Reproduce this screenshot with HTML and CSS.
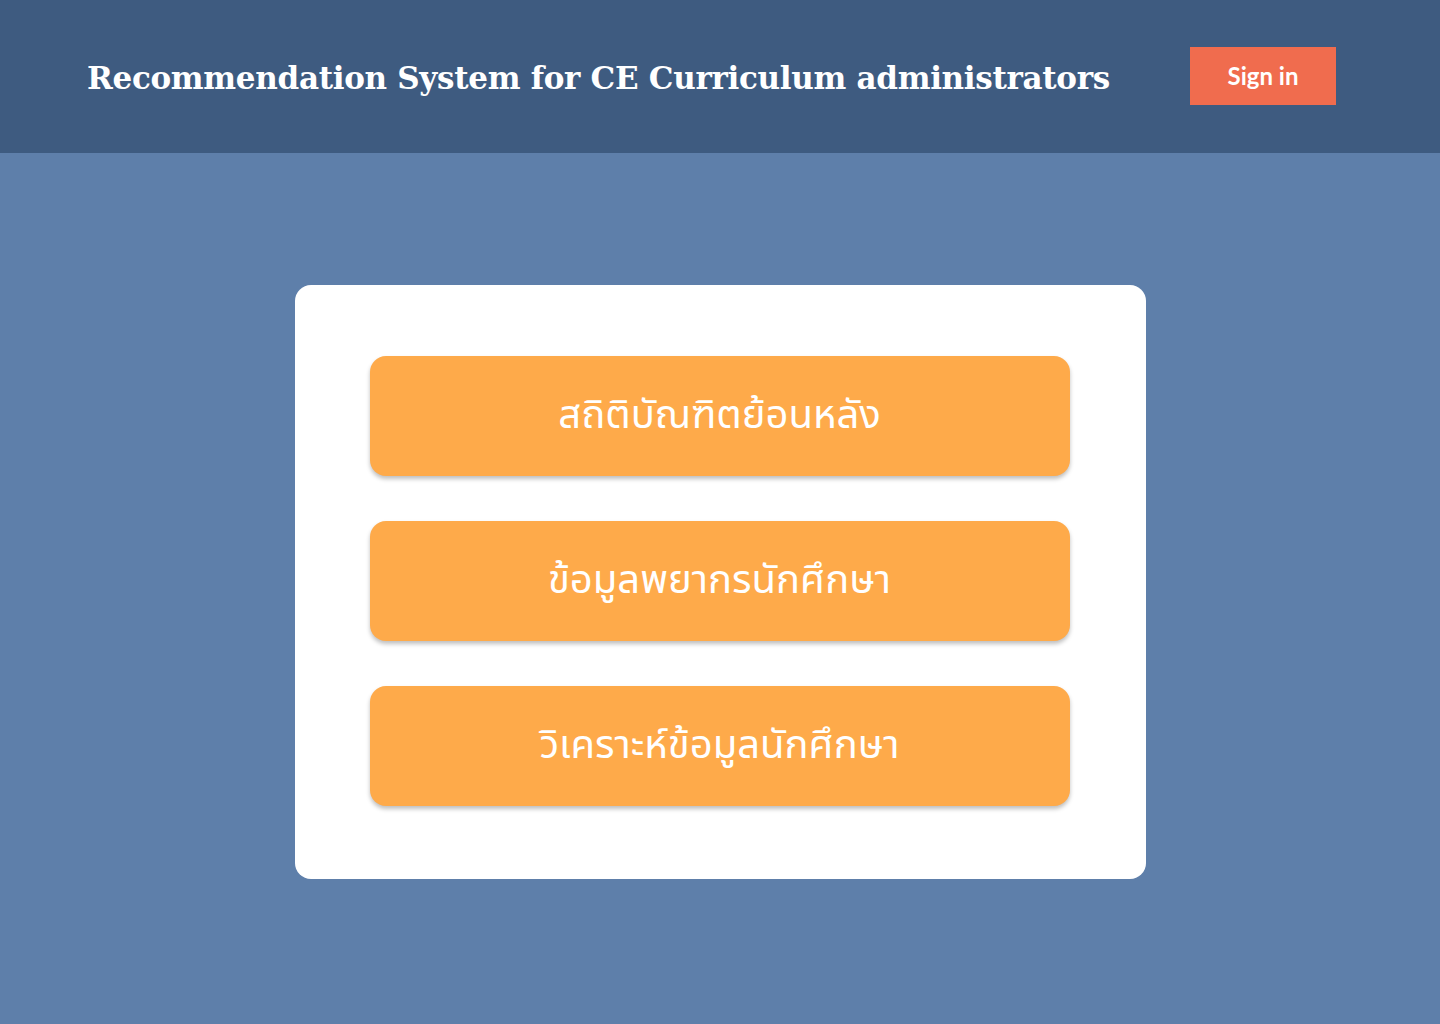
FILE: index.html
```html
<!DOCTYPE html>
<html lang="th">
<head>
<meta charset="utf-8">
<title>Recommendation System</title>
<link rel="stylesheet" href="styles.css">
</head>
<body>
<header class="topbar">
  <h1 class="title">Recommendation System for CE Curriculum administrators</h1>
  <button class="signin">Sign in</button>
</header>
<main class="main">
  <section class="card">
    <button class="menu-btn">สถิติบัณฑิตย้อนหลัง</button>
    <button class="menu-btn">ข้อมูลพยากรนักศึกษา</button>
    <button class="menu-btn">วิเคราะห์ข้อมูลนักศึกษา</button>
  </section>
</main>
</body>
</html>
```
FILE: styles.css
```css
html, body {
  margin: 0;
  padding: 0;
}
body {
  background: #5e7faa;
  min-height: 1024px;
  font-family: "Noto Sans", "Noto Sans Thai", sans-serif;
}
.topbar {
  height: 153px;
  background: #3e5b80;
  display: flex;
  align-items: center;
  justify-content: space-between;
  padding: 0 104px 0 87px;
  box-sizing: border-box;
}
.title {
  margin: 0;
  color: #ffffff;
  font-family: "DejaVu Serif", serif;
  font-weight: bold;
  font-size: 31px;
  letter-spacing: -0.3px;
  padding-top: 2px;
}
.signin {
  width: 146px;
  height: 58px;
  border: none;
  background: #f06c4e;
  color: #ffffff;
  font-family: Lato, sans-serif;
  font-weight: bold;
  font-size: 24px;
  padding: 0;
  margin-bottom: 2px;
}
.main {
  display: flex;
  justify-content: center;
  padding-top: 132px;
}
.card {
  width: 851px;
  height: 594px;
  box-sizing: border-box;
  background: #ffffff;
  border-radius: 16px;
  padding: 71px 75px 0 75px;
  display: flex;
  flex-direction: column;
  gap: 45px;
}
.menu-btn {
  height: 120px;
  width: 700px;
  border: none;
  border-radius: 16px;
  background: #feaa4a;
  color: #ffffff;
  font-family: "Noto Sans Thai", "Noto Sans", sans-serif;
  font-size: 40px;
  box-shadow: 0 3px 4px rgba(0, 0, 0, 0.25);
  padding: 0;
}
```
